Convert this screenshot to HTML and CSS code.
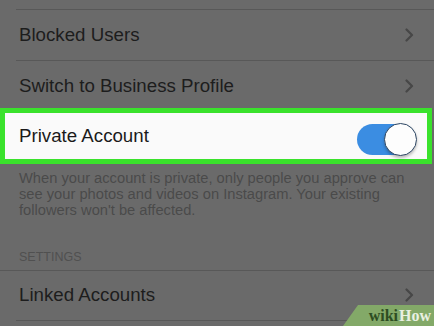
FILE: index.html
```html
<!DOCTYPE html>
<html>
<head>
<meta charset="utf-8">
<link rel="stylesheet" href="styles.css">
</head>
<body>
<div class="screen">
  <div class="top-gap"></div>
  <div class="sep inset"></div>
  <div class="row row-blocked">
    <span class="label">Blocked Users</span>
    <svg class="chev" width="9" height="14" viewBox="0 0 9 14"><polyline points="1.5,1.5 7,7 1.5,12.5" fill="none" stroke="#474747" stroke-width="2.2" stroke-linecap="round" stroke-linejoin="round"/></svg>
  </div>
  <div class="sep inset"></div>
  <div class="row row-switch">
    <span class="label">Switch to Business Profile</span>
    <svg class="chev" width="9" height="14" viewBox="0 0 9 14"><polyline points="1.5,1.5 7,7 1.5,12.5" fill="none" stroke="#474747" stroke-width="2.2" stroke-linecap="round" stroke-linejoin="round"/></svg>
  </div>
  <div class="highlight">
    <span class="label dark">Private Account</span>
    <div class="toggle"><div class="knob"></div></div>
  </div>
  <p class="desc">When your account is private, only people you approve can see your photos and videos on Instagram. Your existing followers won't be affected.</p>
  <div class="section-title">SETTINGS</div>
  <div class="sep"></div>
  <div class="row row-linked">
    <span class="label">Linked Accounts</span>
    <svg class="chev" width="9" height="14" viewBox="0 0 9 14"><polyline points="1.5,1.5 7,7 1.5,12.5" fill="none" stroke="#474747" stroke-width="2.2" stroke-linecap="round" stroke-linejoin="round"/></svg>
  </div>
  <div class="sep inset"></div>
  <div class="badge"><span class="wiki">wiki</span><span class="how">How</span></div>
</div>
</body>
</html>
```

FILE: styles.css
```css
html, body {
  margin: 0;
  padding: 0;
}
body {
  background: #6a6a6a;
  font-family: "Liberation Sans", Arial, sans-serif;
  width: 434px;
  height: 326px;
  overflow: hidden;
}
.screen {
  position: relative;
  width: 434px;
  height: 326px;
  overflow: hidden;
  display: flex;
  flex-direction: column;
}
.top-gap {
  height: 9px;
}
.sep {
  height: 1px;
  background: #585858;
  flex: none;
}
.sep.inset {
  margin-left: 16px;
}
.row {
  display: flex;
  align-items: center;
  justify-content: space-between;
  padding: 0 20px 0 19px;
  flex: none;
}
.row-blocked {
  height: 50px;
}
.row-switch {
  height: 47px;
  box-sizing: border-box;
  padding-top: 3px;
}
.row-linked {
  height: 49px;
  box-sizing: border-box;
  padding-bottom: 1px;
}
.label {
  font-size: 18.7px;
  color: #1d1d1d;
}
.label.dark {
  color: #1a1a1a;
}
.chev {
  display: block;
}
.highlight {
  flex: none;
  width: 432px;
  height: 56px;
  box-sizing: border-box;
  border: 5px solid #3ae22c;
  background: #fafafa;
  display: flex;
  align-items: center;
  justify-content: space-between;
  padding: 0 11px 0 14px;
}
.toggle {
  width: 59px;
  height: 31px;
  border-radius: 16px;
  background: #3b8de2;
  display: flex;
  align-items: center;
  justify-content: flex-end;
  margin-top: 6px;
}
.knob {
  flex: none;
  width: 33px;
  height: 33px;
  box-sizing: border-box;
  margin-right: -1px;
  border-radius: 50%;
  background: #fdfdfd;
  border: 1.5px solid #2d4663;
  box-shadow: 0 2px 3px rgba(0,0,0,0.25);
}
.desc {
  margin: 0;
  padding: 6px 18px 0 19px;
  font-size: 14.7px;
  line-height: 16.2px;
  color: #4a4a4a;
}
.section-title {
  flex: none;
  padding: 31px 0 0 19px;
  height: 20px;
  font-size: 12.5px;
  line-height: 15px;
  color: #505050;
}
.badge {
  position: absolute;
  right: 0;
  bottom: 0;
  width: 91px;
  height: 21px;
  background: #83a968;
  clip-path: polygon(15px 0, 100% 0, 100% 100%, 0 100%);
  display: flex;
  align-items: center;
  justify-content: flex-end;
  padding-right: 3px;
  box-sizing: border-box;
  font-family: "Liberation Serif", "DejaVu Serif", serif;
  font-weight: bold;
  font-size: 16px;
}
.wiki {
  color: #2d4d22;
}
.how {
  color: #e9f0e2;
  margin-left: 1px;
}
```
